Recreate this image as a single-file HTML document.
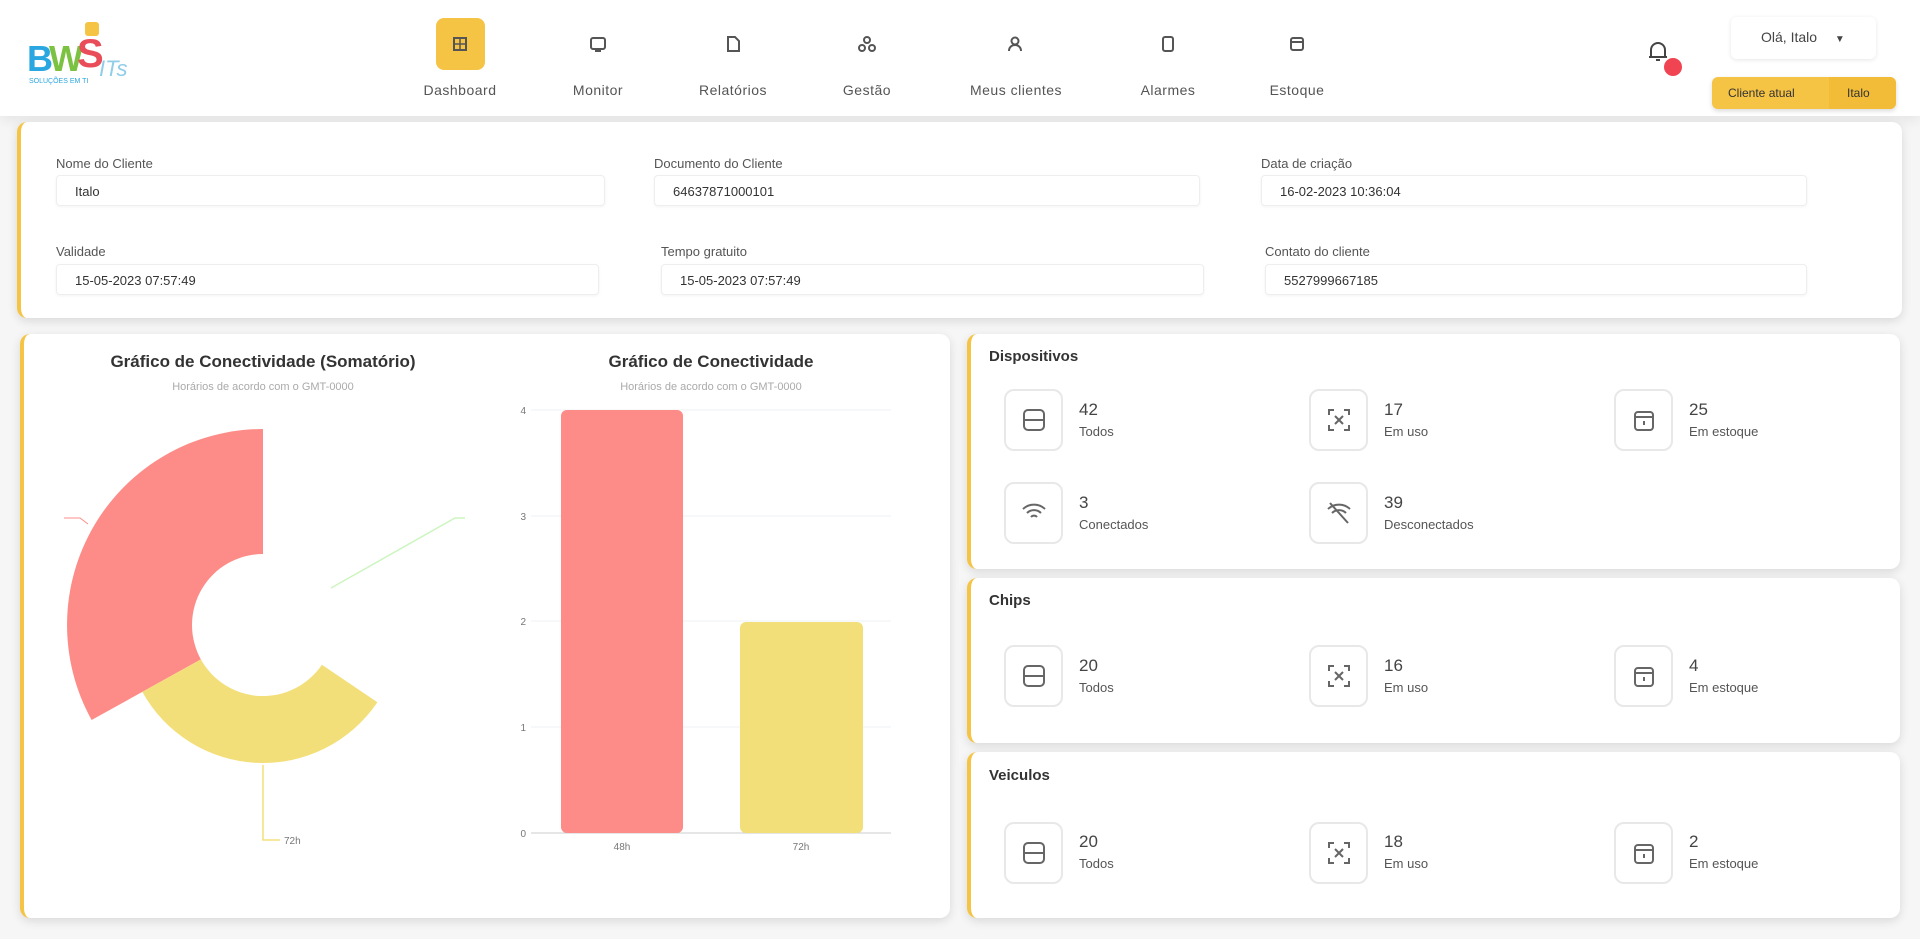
<!DOCTYPE html>
<html><head><meta charset="utf-8"><style>
*{margin:0;padding:0;box-sizing:border-box}
body{width:1920px;height:939px;background:#f6f6f6;font-family:"Liberation Sans",sans-serif;color:#333;position:relative;overflow:hidden}
.a{position:absolute}
.hdr{left:0;top:0;width:1920px;height:116px;background:#fff;box-shadow:0 4px 14px rgba(0,0,0,.08)}
.nav{position:absolute;top:18px;width:120px;text-align:center}
.nav .ic{width:49px;height:52px;margin:0 auto;border-radius:8px;display:flex;align-items:center;justify-content:center}
.nav .lb{font-size:14px;color:#555;margin-top:12px;letter-spacing:.5px}
.card{background:#fff;border-radius:10px;box-shadow:0 3px 10px rgba(0,0,0,.12);border-left:4px solid #f6c445}
.lab{font-size:13px;color:#555}
.inp{height:31px;border:1px solid #eee;border-radius:4px;font-size:13px;padding:8px 18px;color:#333;box-shadow:0 1px 3px rgba(0,0,0,.05)}
.tt{font-size:15px;font-weight:bold;color:#333}
.ib{width:59px;height:62px;border:2px solid #e8e8e8;border-radius:10px;display:flex;align-items:center;justify-content:center;background:#fff}
.num{font-size:17px;color:#444}
.sl{font-size:13px;color:#555}
</style></head><body>
<div class="a hdr"></div>
<!-- logo -->
<div class="a" style="left:27px;top:22px;width:110px;height:66px">
<span class="a" style="left:0;top:16px;font-size:36px;font-weight:bold;color:#2aa7e0;letter-spacing:-3px">B</span>
<span class="a" style="left:22px;top:16px;font-size:36px;font-weight:bold;color:#7cc242;letter-spacing:-3px">W</span>
<span class="a" style="left:50px;top:10px;font-size:40px;font-weight:bold;color:#e94d5a">S</span>
<span class="a" style="left:58px;top:0;width:14px;height:14px;background:#f6c445;border-radius:3px"></span>
<span class="a" style="left:72px;top:34px;font-size:22px;color:#8fcde9;font-style:italic">ITs</span>
<span class="a" style="left:2px;top:56px;font-size:7px;color:#2aa7e0">SOLUÇÕES EM TI</span>
</div>
<!-- nav -->
<div class="nav" style="left:400px"><div class="ic" style="background:#f6c445"><svg width="16" height="16"><rect x="2" y="2" width="12" height="12" fill="none" stroke="#555" stroke-width="2"/><path d="M2 8h12M8 2v12" stroke="#555" stroke-width="1.5"/></svg></div><div class="lb">Dashboard</div></div>
<div class="nav" style="left:538px"><div class="ic"><svg width="18" height="18"><rect x="2" y="3" width="14" height="11" rx="2" fill="none" stroke="#555" stroke-width="2"/><path d="M6 16h6" stroke="#555" stroke-width="2"/></svg></div><div class="lb">Monitor</div></div>
<div class="nav" style="left:673px"><div class="ic"><svg width="18" height="18"><path d="M4 2h7l4 4v10H4z" fill="none" stroke="#555" stroke-width="2"/></svg></div><div class="lb">Relatórios</div></div>
<div class="nav" style="left:807px"><div class="ic"><svg width="18" height="18"><circle cx="9" cy="5" r="3" fill="none" stroke="#555" stroke-width="2"/><circle cx="4" cy="13" r="3" fill="none" stroke="#555" stroke-width="2"/><circle cx="14" cy="13" r="3" fill="none" stroke="#555" stroke-width="2"/></svg></div><div class="lb">Gestão</div></div>
<div class="nav" style="left:956px"><div class="ic"><svg width="18" height="18"><circle cx="8" cy="6" r="3.5" fill="none" stroke="#555" stroke-width="2"/><path d="M2 16c0-4 3-6 6-6s6 2 6 6" fill="none" stroke="#555" stroke-width="2"/></svg></div><div class="lb">Meus clientes</div></div>
<div class="nav" style="left:1108px"><div class="ic"><svg width="18" height="18"><rect x="4" y="2" width="10" height="14" rx="2" fill="none" stroke="#555" stroke-width="2"/></svg></div><div class="lb">Alarmes</div></div>
<div class="nav" style="left:1237px"><div class="ic"><svg width="18" height="18"><rect x="3" y="3" width="12" height="12" rx="2" fill="none" stroke="#555" stroke-width="2"/><path d="M3 7h12" stroke="#555" stroke-width="2"/></svg></div><div class="lb">Estoque</div></div>
<!-- bell -->
<svg class="a" style="left:1647px;top:40px" width="22" height="24"><path d="M4 17V10a7 7 0 0114 0v7zM2 17h18M9 20h4" fill="none" stroke="#444" stroke-width="2"/></svg>
<div class="a" style="left:1664px;top:58px;width:18px;height:18px;border-radius:50%;background:#f04452"></div>
<div class="a" style="left:1731px;top:17px;width:145px;height:42px;background:#fff;border-radius:6px;box-shadow:0 1px 5px rgba(0,0,0,.1);font-size:14px;color:#444;padding:12px 0 0 30px">Olá, Italo <span style="margin-left:14px;font-size:10px">▼</span></div>
<div class="a" style="left:1712px;top:77px;width:184px;height:32px;background:#f6c445;border-radius:6px;box-shadow:0 2px 5px rgba(0,0,0,.15);font-size:12px;color:#333"><span class="a" style="left:16px;top:9px">Cliente atual</span><span class="a" style="left:117px;top:0;width:67px;height:32px;background:#f3bc38;border-radius:0 6px 6px 0;padding:9px 0 0 18px">Italo</span></div>
<!-- info card -->
<div class="a card" style="left:17px;top:122px;width:1885px;height:196px"></div>
<div class="a lab" style="left:56px;top:156px">Nome do Cliente</div><div class="a inp" style="left:56px;top:175px;width:549px">Italo</div>
<div class="a lab" style="left:654px;top:156px">Documento do Cliente</div><div class="a inp" style="left:654px;top:175px;width:546px">64637871000101</div>
<div class="a lab" style="left:1261px;top:156px">Data de criação</div><div class="a inp" style="left:1261px;top:175px;width:546px">16-02-2023 10:36:04</div>
<div class="a lab" style="left:56px;top:244px">Validade</div><div class="a inp" style="left:56px;top:264px;width:543px">15-05-2023 07:57:49</div>
<div class="a lab" style="left:661px;top:244px">Tempo gratuito</div><div class="a inp" style="left:661px;top:264px;width:543px">15-05-2023 07:57:49</div>
<div class="a lab" style="left:1265px;top:244px">Contato do cliente</div><div class="a inp" style="left:1265px;top:264px;width:542px">5527999667185</div>
<!-- chart card -->
<div class="a card" style="left:20px;top:334px;width:930px;height:584px"></div>
<div class="a tt" style="left:63px;top:352px;width:400px;text-align:center;font-size:17px">Gráfico de Conectividade (Somatório)</div>
<div class="a" style="left:63px;top:381px;width:400px;text-align:center;font-size:11px;color:#aaa">Horários de acordo com o GMT-0000</div>
<div class="a tt" style="left:511px;top:352px;width:400px;text-align:center;font-size:17px">Gráfico de Conectividade</div>
<div class="a" style="left:511px;top:381px;width:400px;text-align:center;font-size:11px;color:#aaa">Horários de acordo com o GMT-0000</div>
<svg class="a" style="left:0;top:0" width="960" height="939">
<path d="M263,429 A196,196 0 0 0 91.6,720 L200.9,659.4 A71,71 0 0 1 263,554 Z" fill="#fd8c88"/>
<path d="M142.3,691.9 A138,138 0 0 0 377.4,702.2 L321.9,664.7 A71,71 0 0 1 200.9,659.4 Z" fill="#f3df7a"/>
<path d="M331,588 L455,518 L465,518" fill="none" stroke="#cdf5c0" stroke-width="1.5"/>
<path d="M64,518 L80,518 L88,524" fill="none" stroke="#fd8c88" stroke-width="1"/>
<path d="M263,765 L263,840 L280,840" fill="none" stroke="#f3df7a" stroke-width="1.5"/>
<text x="284" y="844" font-size="10" fill="#777" font-family="Liberation Sans">72h</text>
<g stroke="#edf1f4" stroke-width="1"><line x1="531" y1="410" x2="891" y2="410"/><line x1="531" y1="516" x2="891" y2="516"/><line x1="531" y1="621" x2="891" y2="621"/><line x1="531" y1="727" x2="891" y2="727"/></g>
<line x1="531" y1="833" x2="891" y2="833" stroke="#ccc"/>
<g font-size="10" fill="#777" font-family="Liberation Sans" text-anchor="end"><text x="526" y="414">4</text><text x="526" y="520">3</text><text x="526" y="625">2</text><text x="526" y="731">1</text><text x="526" y="837">0</text></g>
<rect x="561" y="410" width="122" height="423" rx="6" fill="#fd8c88"/>
<rect x="740" y="622" width="123" height="211" rx="6" fill="#f3df7a"/>
<g font-size="10" fill="#777" font-family="Liberation Sans" text-anchor="middle"><text x="622" y="850">48h</text><text x="801" y="850">72h</text></g>
</svg>
<!-- right cards -->
<div class="a card" style="left:967px;top:334px;width:933px;height:235px"></div>
<div class="a card" style="left:967px;top:578px;width:933px;height:165px"></div>
<div class="a card" style="left:967px;top:752px;width:933px;height:166px"></div>
<div class="a tt" style="left:989px;top:348px">Dispositivos</div>
<div class="a tt" style="left:989px;top:592px">Chips</div>
<div class="a tt" style="left:989px;top:767px">Veiculos</div>
<div id="items"></div>
<script></script>
<!-- items rendered statically -->
<div class="a ib" style="left:1004px;top:389px"><svg width="26" height="26"><rect x="3" y="3" width="20" height="20" rx="4" fill="none" stroke="#666" stroke-width="2"/><path d="M3 13h20" stroke="#666" stroke-width="2"/></svg></div><div class="a num" style="left:1079px;top:400px">42</div><div class="a sl" style="left:1079px;top:424px">Todos</div>
<div class="a ib" style="left:1309px;top:389px"><svg width="26" height="26" fill="none" stroke="#666" stroke-width="2"><path d="M3 8V3h5M18 3h5v5M23 18v5h-5M8 23H3v-5M9 9l8 8M17 9l-8 8"/></svg></div><div class="a num" style="left:1384px;top:400px">17</div><div class="a sl" style="left:1384px;top:424px">Em uso</div>
<div class="a ib" style="left:1614px;top:389px"><svg width="26" height="26" fill="none" stroke="#666" stroke-width="2"><rect x="4" y="5" width="18" height="18" rx="3"/><path d="M4 10h18M13 14v4"/></svg></div><div class="a num" style="left:1689px;top:400px">25</div><div class="a sl" style="left:1689px;top:424px">Em estoque</div>
<div class="a ib" style="left:1004px;top:482px"><svg width="26" height="26" fill="none" stroke="#666" stroke-width="2"><path d="M2 9a16 16 0 0122 0M6 13a10 10 0 0114 0M10 17a4 4 0 016 0M13 21h0"/></svg></div><div class="a num" style="left:1079px;top:493px">3</div><div class="a sl" style="left:1079px;top:517px">Conectados</div>
<div class="a ib" style="left:1309px;top:482px"><svg width="26" height="26" fill="none" stroke="#666" stroke-width="2"><path d="M2 9a16 16 0 0122 0M6 13a10 10 0 0114 0M4 3l18 20"/></svg></div><div class="a num" style="left:1384px;top:493px">39</div><div class="a sl" style="left:1384px;top:517px">Desconectados</div>

<div class="a ib" style="left:1004px;top:645px"><svg width="26" height="26"><rect x="3" y="3" width="20" height="20" rx="4" fill="none" stroke="#666" stroke-width="2"/><path d="M3 13h20" stroke="#666" stroke-width="2"/></svg></div><div class="a num" style="left:1079px;top:656px">20</div><div class="a sl" style="left:1079px;top:680px">Todos</div>
<div class="a ib" style="left:1309px;top:645px"><svg width="26" height="26" fill="none" stroke="#666" stroke-width="2"><path d="M3 8V3h5M18 3h5v5M23 18v5h-5M8 23H3v-5M9 9l8 8M17 9l-8 8"/></svg></div><div class="a num" style="left:1384px;top:656px">16</div><div class="a sl" style="left:1384px;top:680px">Em uso</div>
<div class="a ib" style="left:1614px;top:645px"><svg width="26" height="26" fill="none" stroke="#666" stroke-width="2"><rect x="4" y="5" width="18" height="18" rx="3"/><path d="M4 10h18M13 14v4"/></svg></div><div class="a num" style="left:1689px;top:656px">4</div><div class="a sl" style="left:1689px;top:680px">Em estoque</div>

<div class="a ib" style="left:1004px;top:822px"><svg width="26" height="26"><rect x="3" y="3" width="20" height="20" rx="4" fill="none" stroke="#666" stroke-width="2"/><path d="M3 13h20" stroke="#666" stroke-width="2"/></svg></div><div class="a num" style="left:1079px;top:832px">20</div><div class="a sl" style="left:1079px;top:856px">Todos</div>
<div class="a ib" style="left:1309px;top:822px"><svg width="26" height="26" fill="none" stroke="#666" stroke-width="2"><path d="M3 8V3h5M18 3h5v5M23 18v5h-5M8 23H3v-5M9 9l8 8M17 9l-8 8"/></svg></div><div class="a num" style="left:1384px;top:832px">18</div><div class="a sl" style="left:1384px;top:856px">Em uso</div>
<div class="a ib" style="left:1614px;top:822px"><svg width="26" height="26" fill="none" stroke="#666" stroke-width="2"><rect x="4" y="5" width="18" height="18" rx="3"/><path d="M4 10h18M13 14v4"/></svg></div><div class="a num" style="left:1689px;top:832px">2</div><div class="a sl" style="left:1689px;top:856px">Em estoque</div>
</body></html>
